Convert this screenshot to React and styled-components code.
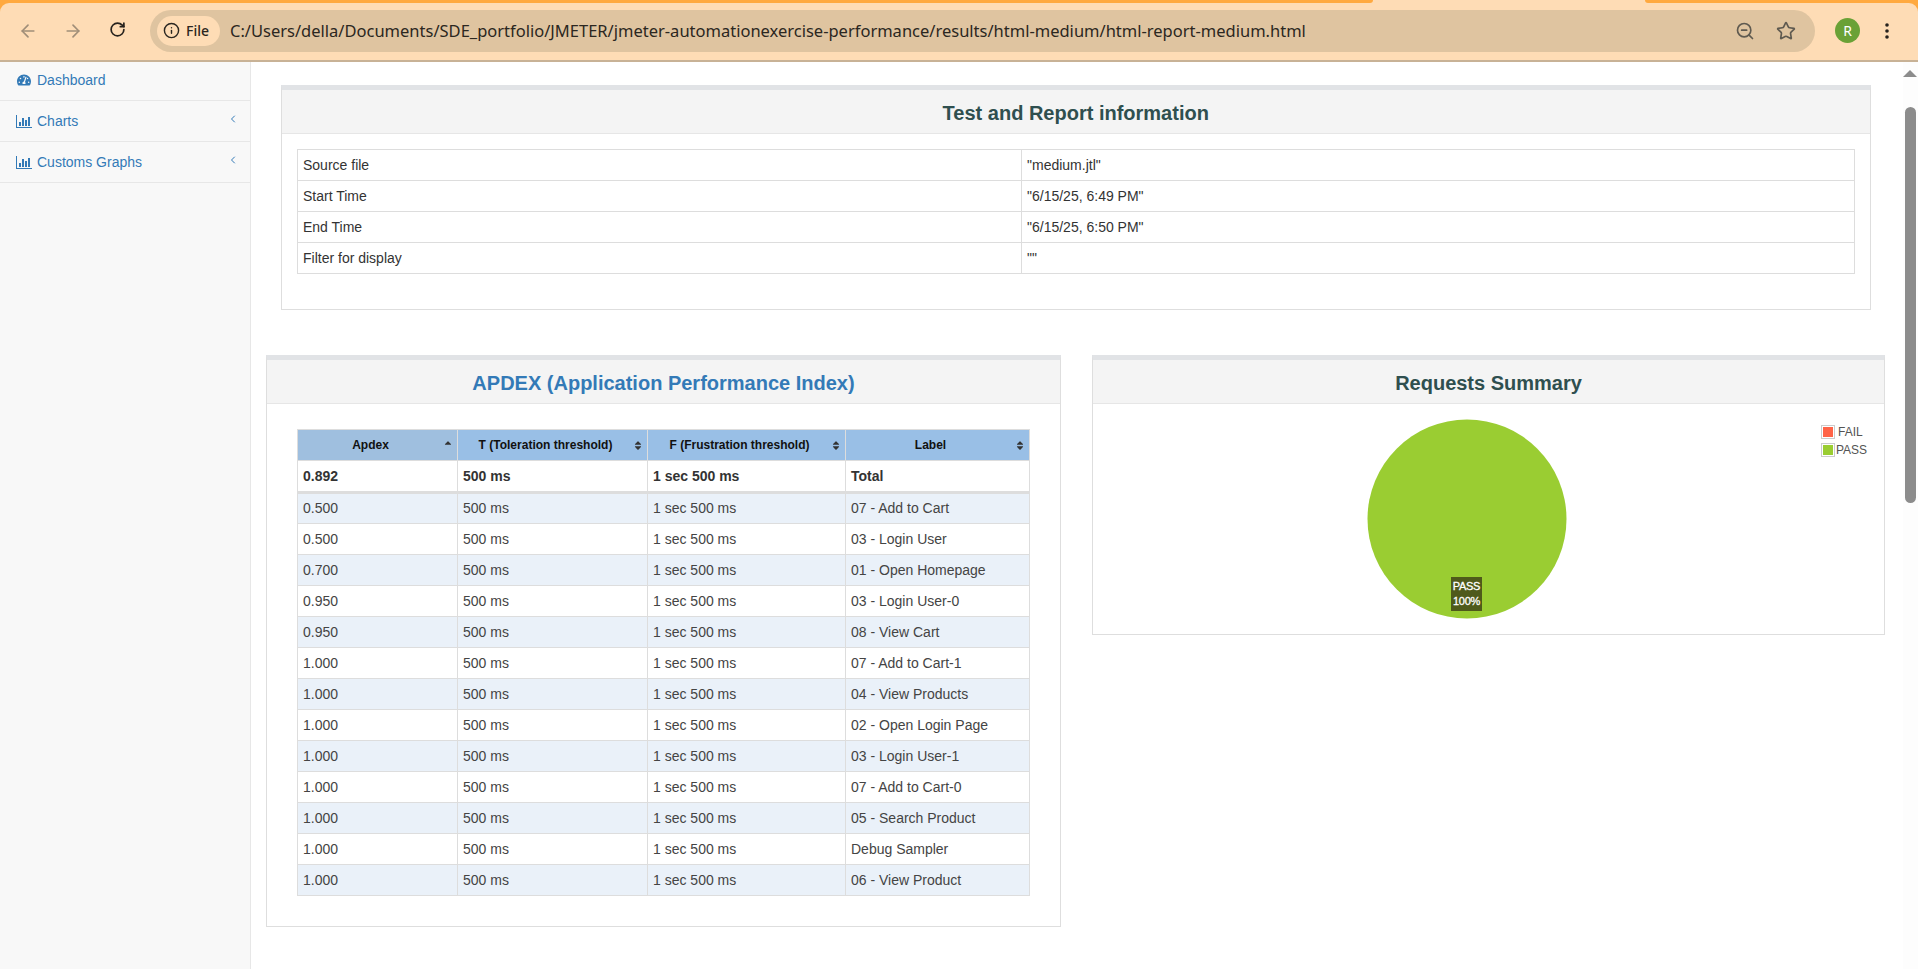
import React from 'react';
import styled, { createGlobalStyle } from 'styled-components';
import { ArrowLeft, ArrowRight, RotateCw, Info, ZoomOut, Star, ChevronLeft } from 'lucide-react';
import { FaTachometerAlt, FaSort, FaSortUp } from 'react-icons/fa';

const Global = createGlobalStyle`
  html, body { margin: 0; padding: 0; height: 100%; overflow: hidden; background: #fff; }
  #root { height: 100%; }
  * { box-sizing: border-box; }
`;

const Page = styled.div`
  width: 1918px; height: 969px; display: flex; flex-direction: column; overflow: hidden;
  font-family: "Liberation Sans", Arial, sans-serif; font-size: 14px; color: #333;
`;
const Chrome = styled.header`
  flex: none; background: #ffa93f; display: flex; flex-direction: column;
`;
const TabStrip = styled.div`
  height: 3px; display: flex; justify-content: space-between; background: #fedcb5;
`;
const TabFill = styled.div`
  height: 3px; background: #ffa93f;
  width: ${p => p.$w}px;
  border-bottom-${p => p.$side}-radius: 3px;
`;
const Toolbar = styled.div`
  height: 59px; background: #fedcb5; border-bottom: 2px solid #c8b296;
  border-radius: 9px 9px 0 0; display: flex; align-items: center; position: relative;
  padding: 0 0 2px 0;
`;
const NavBtn = styled.div`
  width: 45px; flex: none; display: flex; justify-content: center; color: ${p => p.$dim ? '#a08e78' : '#26221d'};
`;
const NavGroup = styled.div`
  display: flex; padding-left: 5px; width: 150px; flex: none;
`;
const Omni = styled.div`
  width: 1665px; height: 42px; border-radius: 21px; background: #dfc4a0; flex: none;
  display: flex; align-items: center; padding: 0 19px 0 7px;
`;
const Chip = styled.div`
  height: 30px; width: 63px; border-radius: 15px; background: #fedcb5; display: flex; align-items: center;
  gap: 6px; padding-left: 6px; font: 500 14px "Noto Sans", sans-serif; color: #2a2620; flex: none;
`;
const Url = styled.div`
  margin-left: 10px; font: 400 16.5px "Noto Sans", sans-serif; color: #2b2721; white-space: nowrap; flex: 1;
`;
const OmniIcons = styled.div`
  display: flex; align-items: center; gap: 21px; color: #5f5a50;
`;
const Avatar = styled.div`
  margin-left: 20px; width: 25px; height: 25px; border-radius: 50%; background: #6aa136; color: #fff;
  display: flex; align-items: center; justify-content: center; font: 400 14px "Noto Sans", sans-serif; flex: none;
`;
const Dots = styled.svg`
  margin-left: 25px; flex: none;
`;

const Body = styled.div`
  flex: 1; display: flex; min-height: 0;
`;
const Sidebar = styled.nav`
  width: 251px; flex: none; background: #f8f8f8; border-right: 1px solid #e7e7e7;
`;
const NavItem = styled.div`
  height: ${p => p.$h}px; border-bottom: 1px solid #e7e7e7; display: flex; align-items: center;
  padding: 0 11px ${p => p.$pb || 0}px ${p => p.$pl}px; color: #337ab7;
`;
const NavLabel = styled.span`
  margin-left: ${p => p.$ml}px; flex: 1;
`;
const Chevron = styled(ChevronLeft)`
  width: 12px; height: 12px; margin-bottom: 5px; stroke-width: 2;
`;

const Main = styled.main`
  flex: 1; min-width: 0; padding: 23px 17.5px 0 15px; display: flex; flex-direction: column; gap: 45px;
`;
const Panel = styled.section`
  border: 1px solid #dedede; border-top: 5px solid #e1e3e6; background: #fff;
  ${p => p.$h && `height: ${p.$h}px;`}
  ${p => p.$inset && 'margin: 0 15px 0 15px;'}
`;
const PanelHead = styled.div`
  height: 44px; background: #f4f4f4; border-bottom: 1px solid #e6e6e6; display: flex; align-items: center;
  justify-content: center; padding-top: 4px;
`;
const Title = styled.h2`
  margin: 0; font: 700 20px "Liberation Sans", Arial, sans-serif; color: ${p => p.$blue ? '#337ab7' : '#2f4f4f'};
`;
const PanelBody = styled.div`
  padding: ${p => p.$pad};
`;
const Row2 = styled.div`
  display: grid; grid-template-columns: 795px 793px; gap: 31px; align-items: start;
`;

const Table = styled.table`
  border-collapse: collapse; table-layout: fixed; width: 100%;
`;
const Td = styled.td`
  height: 31px; padding: 0 5px; border: 1px solid #ddd; font-size: 14px; color: ${p => p.$dark ? '#333' : '#444'};
  ${p => p.$bold && 'font-weight: 700; color: #333;'}
`;
const Tr = styled.tr`
  background: ${p => p.$alt ? '#eaf1f9' : '#fff'};
  ${p => p.$total && `
    & > td { height: 32px; border-bottom: 3px solid #ddd; }
  `}
  ${p => p.$afterTotal && `
    & > td { padding-bottom: 2px; }
  `}
`;
const Th = styled.th`
  height: 31px; padding: 0 14px 0 0; border: 1px solid #ddd; background: ${p => p.$sorted ? '#9fbfdf' : '#99bfe6'};
  font-size: 12px; font-weight: 700; color: #111; text-align: center; position: relative;
`;
const SortMark = styled.span`
  position: absolute; right: 4px; top: 10px; width: 10px; height: 11px; color: #333; display: flex;
  & > svg { width: 10px; height: 11px; }
`;

const ChartArea = styled.div`
  position: relative; height: 229px; padding: 15px 0 0 274px;
`;
const PieLabel = styled.div`
  position: absolute; left: 358px; top: 173px; width: 31px; height: 34px; background: #4f5a1b; color: #fff;
  font-size: 11px; line-height: 15px; text-align: center; padding-top: 2px; font-weight: 400;
  -webkit-text-stroke: 0.3px #fff; letter-spacing: -0.3px;
`;
const Legend = styled.div`
  position: absolute; left: 728px; top: 21px; display: grid; grid-template-columns: 14px auto; row-gap: 4px;
  font-size: 12px; color: #545454; line-height: 14px;
`;
const LegendBox = styled.div`
  width: 14px; height: 14px; border: 1px solid #ccc; padding: 1px;
  &::after { content: ''; display: block; width: 100%; height: 100%; background: ${p => p.$c}; }
`;
const LegendText = styled.div`
  padding-left: ${p => p.$pl}px;
`;

const Rail = styled.div`
  width: 15px; flex: none; background: #fdfdfd; padding: 8px 2px 0 1px; display: flex; flex-direction: column; align-items: center;
`;
const RailArrow = styled.div`
  width: 0; height: 0; border-left: 7px solid transparent; border-right: 7px solid transparent; border-bottom: 7px solid #8c8c8c;
`;
const Thumb = styled.div`
  margin-top: 30px; width: 11px; height: 396px; border-radius: 6px; background: #8c8c8c;
`;

const BarsIcon = () => (
  <svg width="16" height="14" viewBox="0 0 16 14" fill="#337ab7">
    <rect x="0" y="1" width="1" height="13" />
    <rect x="0" y="13" width="16" height="1" />
    <rect x="3" y="8" width="2" height="4" />
    <rect x="6" y="4" width="2" height="8" />
    <rect x="9" y="6" width="2" height="6" />
    <rect x="12" y="3" width="2" height="9" />
  </svg>
);

const info = [
  ['Source file', '"medium.jtl"'],
  ['Start Time', '"6/15/25, 6:49 PM"'],
  ['End Time', '"6/15/25, 6:50 PM"'],
  ['Filter for display', '""'],
];
const rows = [
  ['0.500', '07 - Add to Cart'],
  ['0.500', '03 - Login User'],
  ['0.700', '01 - Open Homepage'],
  ['0.950', '03 - Login User-0'],
  ['0.950', '08 - View Cart'],
  ['1.000', '07 - Add to Cart-1'],
  ['1.000', '04 - View Products'],
  ['1.000', '02 - Open Login Page'],
  ['1.000', '03 - Login User-1'],
  ['1.000', '07 - Add to Cart-0'],
  ['1.000', '05 - Search Product'],
  ['1.000', 'Debug Sampler'],
  ['1.000', '06 - View Product'],
];

export default function App() {
  return (
    <Page>
      <Global />
      <Chrome>
        <TabStrip>
          <TabFill $w={1373} $side="right" />
          <TabFill $w={273} $side="left" />
        </TabStrip>
        <Toolbar>
          <NavGroup>
            <NavBtn $dim><ArrowLeft size={20} strokeWidth={2} /></NavBtn>
            <NavBtn $dim><ArrowRight size={20} strokeWidth={2} /></NavBtn>
            <NavBtn><RotateCw size={17} strokeWidth={2.4} /></NavBtn>
          </NavGroup>
          <Omni>
            <Chip><Info size={17} strokeWidth={2} />File</Chip>
            <Url>C:/Users/della/Documents/SDE_portfolio/JMETER/jmeter-automationexercise-performance/results/html-medium/html-report-medium.html</Url>
            <OmniIcons>
              <ZoomOut size={20} strokeWidth={2} />
              <Star size={20} strokeWidth={2} />
            </OmniIcons>
          </Omni>
          <Avatar>R</Avatar>
          <Dots width="4" height="16" viewBox="0 0 4 16" fill="#26221d">
            <circle cx="2" cy="2" r="1.8" /><circle cx="2" cy="8" r="1.8" /><circle cx="2" cy="14" r="1.8" />
          </Dots>
        </Toolbar>
      </Chrome>
      <Body>
        <Sidebar>
          <NavItem $h={39} $pl={17} $pb={2}><FaTachometerAlt size={14} /><NavLabel $ml={6}>Dashboard</NavLabel></NavItem>
          <NavItem $h={41} $pl={16}><BarsIcon /><NavLabel $ml={5}>Charts</NavLabel><Chevron /></NavItem>
          <NavItem $h={41} $pl={16}><BarsIcon /><NavLabel $ml={5}>Customs Graphs</NavLabel><Chevron /></NavItem>
        </Sidebar>
        <Main>
          <Panel $inset $h={225}>
            <PanelHead><Title>Test and Report information</Title></PanelHead>
            <PanelBody $pad="15px 15px 0 15px">
              <Table>
                <colgroup><col style={{ width: 724 }} /><col /></colgroup>
                <tbody>
                  {info.map(([a, b]) => (
                    <Tr key={a}><Td $dark>{a}</Td><Td $dark>{b}</Td></Tr>
                  ))}
                </tbody>
              </Table>
            </PanelBody>
          </Panel>
          <Row2>
            <Panel $h={572}>
              <PanelHead><Title $blue>APDEX (Application Performance Index)</Title></PanelHead>
              <PanelBody $pad="25px 30px 0 30px">
                <Table>
                  <colgroup>
                    <col style={{ width: 160 }} /><col style={{ width: 190 }} /><col style={{ width: 198 }} /><col />
                  </colgroup>
                  <thead>
                    <tr>
                      <Th $sorted>Apdex<SortMark><FaSortUp /></SortMark></Th>
                      <Th>T (Toleration threshold)<SortMark><FaSort /></SortMark></Th>
                      <Th>F (Frustration threshold)<SortMark><FaSort /></SortMark></Th>
                      <Th>Label<SortMark><FaSort /></SortMark></Th>
                    </tr>
                  </thead>
                  <tbody>
                    <Tr $total>
                      <Td $bold>0.892</Td><Td $bold>500 ms</Td><Td $bold>1 sec 500 ms</Td><Td $bold>Total</Td>
                    </Tr>
                    {rows.map(([a, l], i) => (
                      <Tr key={l} $alt={i % 2 === 0} $afterTotal={i === 0}>
                        <Td>{a}</Td><Td>500 ms</Td><Td>1 sec 500 ms</Td><Td>{l}</Td>
                      </Tr>
                    ))}
                  </tbody>
                </Table>
              </PanelBody>
            </Panel>
            <Panel $h={280}>
              <PanelHead><Title>Requests Summary</Title></PanelHead>
              <ChartArea>
                <svg width="200" height="200" viewBox="0 0 200 200" style={{ display: 'block' }}>
                  <circle cx="100" cy="100" r="99.5" fill="#9acd32" />
                </svg>
                <PieLabel>PASS<br />100%</PieLabel>
                <Legend>
                  <LegendBox $c="#ff6347" /><LegendText $pl={3}>FAIL</LegendText>
                  <LegendBox $c="#9acd32" /><LegendText $pl={1}>PASS</LegendText>
                </Legend>
              </ChartArea>
            </Panel>
          </Row2>
        </Main>
        <Rail>
          <RailArrow />
          <Thumb />
        </Rail>
      </Body>
    </Page>
  );
}
